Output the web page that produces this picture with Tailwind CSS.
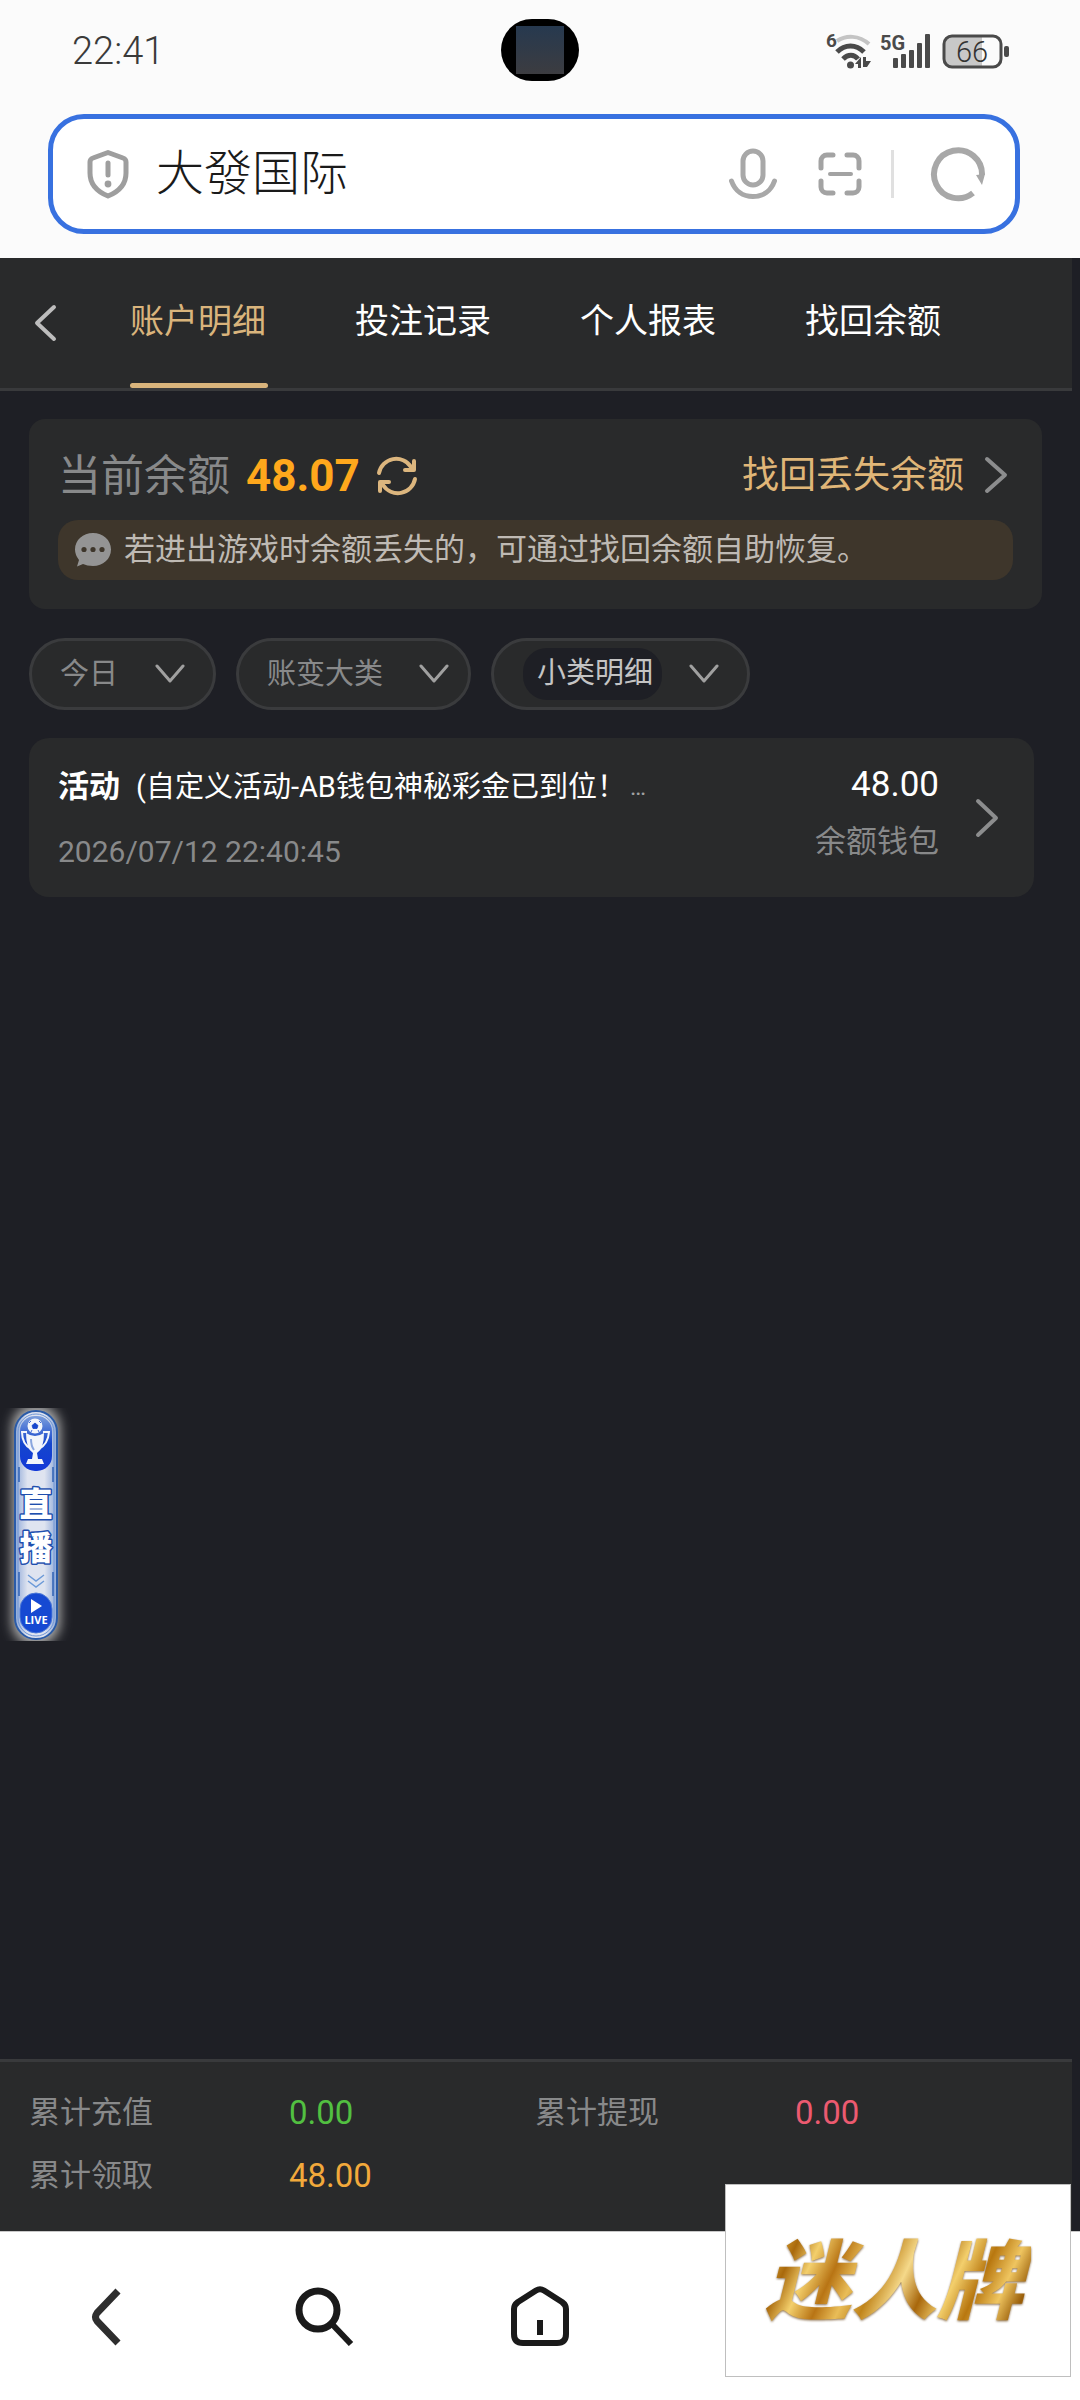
<!DOCTYPE html>
<html lang="zh-CN">
<head>
  <meta charset="UTF-8">
  <meta name="viewport" content="width=device-width, initial-scale=1.0">
  <title>大發国际</title>
  <script src="https://cdn.jsdelivr.net/npm/@tailwindcss/browser@4"></script>
</head>
<body class="relative flex flex-col min-h-screen bg-[#1e1f25] font-['Roboto','Noto_Sans_CJK_SC',sans-serif]">

  <!-- Status bar + address bar -->
  <header class="bg-[#fbfbfb] pb-6">
    <div class="relative flex items-center justify-between h-[114px] pl-[72px] pr-[70px] pb-3">
      <span class="text-[38px] leading-none font-light text-[#3a3a3a]">22:41</span>
      <div class="absolute left-1/2 top-[19px] w-[78px] h-[62px] -translate-x-1/2 rounded-[31px] bg-black overflow-hidden flex items-center justify-center">
        <div class="w-12 h-12 bg-linear-to-b from-[#26394f] to-[#3c3c40]"></div>
      </div>
      <div class="flex items-center">
        <svg class="w-[46px] h-9 overflow-visible" viewBox="0 0 46 36" fill="none" stroke="#4a4a4a" aria-hidden="true">
          <text x="0" y="14" font-size="19" font-weight="700" fill="#4a4a4a" stroke="none">6</text>
          <path d="M11 8 C20 2 33 2 43 11" stroke="#c4c4c4" stroke-width="4"/>
          <path d="M11 19 C19 11 30 11 38 19" stroke-width="5"/>
          <path d="M17 26 C22 21 28 21 32 26" stroke-width="5"/>
          <circle cx="24.500" cy="32" r="3.500" fill="#4a4a4a" stroke="none"/>
          <path d="M35 24v11h-3v-4h-3z M40 24v4h5l-4 6h-4V24z" fill="#4a4a4a" stroke="none"/>
        </svg>
        <svg class="w-[54px] h-9 ml-2 overflow-visible" viewBox="0 0 54 36" fill="#4a4a4a" aria-hidden="true">
          <text x="0" y="17" font-size="20" font-weight="700">5G</text>
          <rect x="13" y="25" width="5" height="10" rx="1"/>
          <rect x="21" y="21" width="5" height="14" rx="1"/>
          <rect x="29" y="17" width="5" height="18" rx="1"/>
          <rect x="37" y="10" width="5" height="25" rx="1"/>
          <rect x="45" y="1" width="5" height="34" rx="1"/>
        </svg>
        <svg class="w-[68px] h-9 ml-2" viewBox="0 0 68 36" aria-hidden="true">
          <path d="M9 3h31v30H9a6 6 0 0 1-6-6V9a6 6 0 0 1 6-6z" fill="#c8c8c8"/>
          <rect x="2" y="3" width="57" height="31" rx="8" fill="none" stroke="#4a4a4a" stroke-width="3"/>
          <rect x="62" y="13" width="5" height="11" rx="2" fill="#4a4a4a"/>
          <text x="30" y="29" font-size="29" font-weight="300" text-anchor="middle" fill="#333">66</text>
        </svg>
      </div>
    </div>
    <div class="flex items-center h-[120px] ml-12 mr-[60px] pl-[33px] pr-[29px] bg-white border-[5px] border-[#3871e0] rounded-[36px]">
      <svg class="w-[44px] h-[50px] shrink-0" viewBox="0 0 44 50" fill="none" stroke="#9e9e9e" stroke-width="5" stroke-linejoin="round" stroke-linecap="round" aria-hidden="true">
        <path d="M22 3.500 L37 9 Q40 10 40 13 V24 C40 36 32 43 22 47 C12 43 4 36 4 24 V13 Q4 10 7 9 Z"/>
        <path d="M22 14v12" stroke-width="5"/>
        <circle cx="22" cy="35" r="3.400" fill="#9e9e9e" stroke="none"/>
      </svg>
      <input type="text" aria-label="搜索" value="大發国际" class="flex-1 min-w-0 ml-[26px] text-[48px] leading-[60px] font-light text-[#1a1a1a] outline-none">
      <button type="button" aria-label="语音">
        <svg class="w-12 h-[52px]" viewBox="0 0 48 52" fill="none" stroke="#a8a8a8" stroke-width="5">
          <rect x="14" y="3" width="20" height="34" rx="10"/>
          <path d="M2.500 33 C6 43 14 48.500 24 48.500 S42 43 45.500 33" stroke-linecap="round"/>
        </svg>
      </button>
      <button type="button" aria-label="扫码" class="ml-10">
        <svg class="w-[46px] h-[46px]" viewBox="0 0 46 46" fill="none" stroke="#a3a3a3" stroke-width="5" stroke-linecap="round">
          <path d="M16 4H10a6 6 0 0 0-6 6v7 M30 4h6a6 6 0 0 1 6 6v7 M4 30v6a6 6 0 0 0 6 6h6 M42 30v6a6 6 0 0 1-6 6h-6"/>
          <path d="M13 23h21" stroke-width="4"/>
        </svg>
      </button>
      <span class="w-[3px] h-12 ml-7 bg-[#e0e0e0]"></span>
      <button type="button" aria-label="刷新" class="ml-9">
        <svg class="w-14 h-14" viewBox="0 0 56 56" fill="none">
          <path d="M43 47 A24 24 0 1 1 52 29" stroke="#a8a8a8" stroke-width="6"/>
          <path d="M46 29 L55 28 L52 39 Z" fill="#a8a8a8"/>
        </svg>
      </button>
    </div>
  </header>

  <div class="flex flex-col flex-1 mr-2">
    <nav class="flex items-center h-[133px] pl-8 bg-[#292a2b] border-b-[3px] border-[#393a3c]">
      <button type="button" aria-label="返回">
        <svg class="w-7 h-10" viewBox="0 0 28 40" fill="none" stroke="#bdbdbd" stroke-width="4" stroke-linecap="round" stroke-linejoin="round">
          <path d="M22 4 L5 20 L22 36"/>
        </svg>
      </button>
      <div class="flex self-stretch gap-[87px] ml-[70px] text-[34px] leading-[126px] text-white whitespace-nowrap">
        <a href="#" class="w-[138px] h-[130px] text-[#d9b47c] flex flex-col justify-between">
          <span class="h-[125px]">账户明细</span>
          <span class="h-[5px] rounded-full bg-[#d9b47c]"></span>
        </a>
        <a href="#" class="w-[138px]">投注记录</a>
        <a href="#" class="w-[138px]">个人报表</a>
        <a href="#" class="w-[138px]">找回余额</a>
      </div>
    </nav>

    <main class="flex-1">
      <!-- Balance -->
      <section class="mt-7 ml-[29px] mr-[30px] px-[29px] pt-8 pb-[29px] rounded-2xl bg-[#292a2b]">
        <div class="flex items-center h-[50px] mb-[19px]">
          <span class="text-[43px] leading-[50px] text-[#88898a]">当前余额</span>
          <span class="ml-4 text-[44px] leading-[50px] font-bold text-[#ffa81c]">48.07</span>
          <button type="button" aria-label="刷新余额" class="ml-4">
            <svg class="w-[42px] h-[42px]" viewBox="0 0 42 42" fill="none" stroke="#dcb67e" stroke-width="4" stroke-linecap="round" stroke-linejoin="round">
              <path d="M3 18 A17.500 17.500 0 0 1 35 12 M38 6 V15 H29"/>
              <path d="M39 24 A17.500 17.500 0 0 1 7 30 M4 36 V27 H13"/>
            </svg>
          </button>
          <a href="#" class="flex items-center ml-auto text-[37px] leading-[50px] text-[#e0b678]">
            找回丢失余额
            <svg class="w-[30px] h-10 ml-[19px]" viewBox="0 0 30 40" fill="none" stroke="#8c8d8e" stroke-width="4" stroke-linecap="round" stroke-linejoin="round">
              <path d="M4 3 L22 19 L4 35"/>
            </svg>
          </a>
        </div>
        <div class="flex items-center h-[60px] pl-4 rounded-[20px] bg-[#3e362b] text-[31px] leading-[60px] text-[#bfbab4] whitespace-nowrap">
          <svg class="w-[38px] h-9 mr-3" viewBox="0 0 38 36" aria-hidden="true">
            <path d="M19 1 C29 1 37 8 37 17.500 S29 34 19 34 Q13 34 9 32 Q6 33 3 34.500 L5 28 Q1 23 1 17.500 C1 8 9 1 19 1z" fill="#949494"/>
            <circle cx="10" cy="17.500" r="2.600" fill="#3e362b"/>
            <circle cx="19" cy="17.500" r="2.600" fill="#3e362b"/>
            <circle cx="28" cy="17.500" r="2.600" fill="#3e362b"/>
          </svg>
          若进出游戏时余额丢失的，可通过找回余额自助恢复。
        </div>
      </section>

      <!-- Filters -->
      <form class="flex gap-5 mt-[29px] ml-[29px] text-[29px] text-[#88898a]">
        <label class="flex items-center justify-between w-[187px] h-[72px] pl-7 pr-[27px] rounded-full border-[3px] border-[#3a3b3d] bg-[#292a2b]">
          <select aria-label="日期" class="appearance-none w-[70px] h-[52px] pt-[2px] outline-none"><option>今日</option></select>
          <svg class="w-8 h-5" viewBox="0 0 32 20" fill="none" stroke="#a0a0a0" stroke-width="3" stroke-linecap="round" stroke-linejoin="round"><path d="M3 2 L16 17 L29 2"/></svg>
        </label>
        <label class="flex items-center justify-between w-[235px] h-[72px] pl-7 pr-[18px] rounded-full border-[3px] border-[#3a3b3d] bg-[#292a2b]">
          <select aria-label="账变大类" class="appearance-none w-[130px] h-[52px] pt-[2px] outline-none"><option>账变大类</option></select>
          <svg class="w-8 h-5" viewBox="0 0 32 20" fill="none" stroke="#a0a0a0" stroke-width="3" stroke-linecap="round" stroke-linejoin="round"><path d="M3 2 L16 17 L29 2"/></svg>
        </label>
        <label class="flex items-center justify-between w-[259px] h-[72px] pl-[29px] pr-[27px] rounded-full border-[3px] border-[#3a3b3d] bg-[#292a2b]">
          <select aria-label="小类明细" class="appearance-none w-[139px] h-[52px] pl-[14px] rounded-3xl bg-[#1e1f25] text-[#c4c4c4] outline-none"><option>小类明细</option></select>
          <svg class="w-8 h-5" viewBox="0 0 32 20" fill="none" stroke="#a0a0a0" stroke-width="3" stroke-linecap="round" stroke-linejoin="round"><path d="M3 2 L16 17 L29 2"/></svg>
        </label>
      </form>

      <!-- Record -->
      <a href="#" class="flex h-[159px] mt-7 ml-[29px] mr-[38px] pl-[29px] pr-8 rounded-[20px] bg-[#292a2b]">
        <div class="flex flex-col gap-[25px] pt-[29px] leading-10 whitespace-nowrap">
          <div class="flex text-white">
            <b class="text-[31px]">活动</b>
            <span class="ml-4 text-[29px]">(自定义活动-AB钱包神秘彩金已到位！</span>
            <span class="ml-1 text-2xl leading-10 text-[#a0a1a2]">…</span>
          </div>
          <time class="text-[30px] text-[#88898a]">2026/07/12 22:40:45</time>
        </div>
        <div class="flex flex-col gap-[17px] pt-[27px] ml-auto text-right leading-10">
          <span class="text-[35px] leading-10 text-white">48.00</span>
          <span class="text-[31px] text-[#88898a]">余额钱包</span>
        </div>
        <svg class="self-center w-7 h-10 ml-[35px]" viewBox="0 0 28 40" fill="none" stroke="#8c8d8e" stroke-width="4" stroke-linecap="round" stroke-linejoin="round" aria-hidden="true">
          <path d="M4 3 L22 20 L4 37"/>
        </svg>
      </a>
    </main>

    <!-- Totals -->
    <dl class="grid grid-cols-[260px_246px_260px_1fr] auto-rows-[63px] h-[172px] pl-[29px] pt-[19px] content-start border-t-[3px] border-[#393a3c] bg-[#292a2b] text-[31px] leading-[63px] text-[#88898a]">
      <dt>累计充值</dt>
      <dd class="text-[33px] leading-[63px] text-[#52c041]">0.00</dd>
      <dt>累计提现</dt>
      <dd class="text-[33px] leading-[63px] text-[#ec5a70]">0.00</dd>
      <dt>累计领取</dt>
      <dd class="text-[33px] leading-[63px] text-[#f2a93b]">48.00</dd>
    </dl>
  </div>

  <!-- Browser toolbar -->
  <footer class="grid grid-cols-5 items-center justify-items-center h-[169px] border-t border-[#c8c8c8] bg-white">
    <button type="button" aria-label="后退">
      <svg class="w-9 h-[60px]" viewBox="0 0 36 60" fill="none" stroke="#2e2e2e" stroke-width="7" stroke-linejoin="round"><path d="M28 5 L7 27 Q4 31 7 35 L28 57"/></svg>
    </button>
    <button type="button" aria-label="搜索">
      <svg class="w-[60px] h-[60px]" viewBox="0 0 60 60" fill="none" stroke="#1a1a1a" stroke-width="7"><circle cx="24" cy="24" r="19"/><path d="M37 37 L57 58" stroke-width="6"/></svg>
    </button>
    <button type="button" aria-label="主页">
      <svg class="w-[60px] h-[62px]" viewBox="0 0 60 62" fill="none" stroke="#1a1a1a" stroke-width="6" stroke-linejoin="round"><path d="M26 5.500 Q30 3 34 5.500 L52 17 Q56 20 56 24 V49 Q56 58 47 58 H13 Q4 58 4 49 V24 Q4 20 8 17 Z"/><path d="M30 35v15"/></svg>
    </button>
  </footer>

  <!-- Floating live entry -->
  <a href="#" aria-label="直播" class="absolute left-0 top-[1408px]">
    <svg class="w-[76px] h-[233px]" viewBox="0 0 76 233" font-family="'Noto Sans CJK SC', sans-serif">
      <defs>
        <filter id="glow" x="-50%" y="-10%" width="200%" height="120%"><feGaussianBlur stdDeviation="6"/></filter>
        <linearGradient id="silver" x1="0" x2="1">
          <stop offset="0" stop-color="#8fa9d8"/><stop offset=".3" stop-color="#dfe4f0"/><stop offset=".7" stop-color="#dfe4f0"/><stop offset="1" stop-color="#8fa9d8"/>
        </linearGradient>
        <linearGradient id="blue" x1="0" y1="0" x2="0" y2="1">
          <stop offset="0" stop-color="#7d9fdc"/><stop offset=".5" stop-color="#1546cd"/><stop offset="1" stop-color="#1238d8"/>
        </linearGradient>
      </defs>
      <rect x="12" y="-4" width="48" height="242" rx="24" fill="#b0b0b0" filter="url(#glow)"/>
      <rect x="15" y="3" width="42" height="228" rx="21" fill="url(#silver)" stroke="#2a5ba8" stroke-width="2"/>
      <rect x="18" y="6" width="36" height="222" rx="18" fill="none" stroke="#6f96d6" stroke-width="1"/>
      <rect x="20" y="8" width="32" height="55" rx="15" fill="url(#blue)"/>
      <path d="M19 59v15M53 59v15M19 164v24M53 164v24" stroke="#2f62b5" stroke-width="1.500"/>
      <!-- trophy -->
      <g fill="#f2f5fb">
        <circle cx="35" cy="18" r="7.500"/>
        <path d="M26 25 Q35 31 44 25 Q44 41 37 45 L38 51 H42 L44 56 H26 L28 51 H32 L33 45 Q26 41 26 25z"/>
      </g>
      <path d="M27 24 H22 Q22 36 31 41 M43 24 H49 Q48 36 39 41" fill="none" stroke="#f2f5fb" stroke-width="2"/>
      <path d="M35 15 L38 17.500 L37 20.500 H33 L32 17.500z M29 15l2-2M41 15l-2-2M31 24l1-2M39 24l-1-2" fill="#1546cd" stroke="#1546cd" stroke-width=".8"/>
      <path d="M31 31 Q31 38 34 42" fill="none" stroke="#8aa6de" stroke-width="2"/>
      <g font-size="33" font-weight="900" text-anchor="middle" fill="#fff" stroke="#1f4fae" stroke-width="3" paint-order="stroke" stroke-linejoin="round">
        <text x="36" y="108">直</text>
        <text x="36" y="152">播</text>
      </g>
      <path d="M28 167 L36 173 L44 167 M28 173 L36 179 L44 173" fill="none" stroke="#6c9ad8" stroke-width="1.500"/>
      <rect x="20" y="185" width="32" height="40" rx="16" fill="#1649d2" stroke="#4b78d8" stroke-width="1"/>
      <path d="M31 191 L42 198 L31 205z" fill="#fff"/>
      <text x="36" y="216" font-family="'Open Sans', sans-serif" font-size="11" font-weight="700" text-anchor="middle" fill="#fff">LIVE</text>
    </svg>
  </a>

  <!-- Corner banner -->
  <a href="#" class="absolute right-[9px] bottom-[23px] flex items-center justify-center w-[346px] h-[193px] pt-1 pr-2 border border-[#bfbfbf] bg-white">
    <span class="px-2 text-[86px] leading-[120px] font-black italic text-transparent bg-clip-text bg-[linear-gradient(115deg,#b97a12_0%,#e6b23e_8%,#a9690c_15%,#f3cf6c_22%,#b87414_30%,#e9bd58_37%,#c0841a_44%,#f5d98a_52%,#a8670c_60%,#f3cf6c_68%,#b8770f_76%,#efc560_84%,#9a5f0a_91%,#d9a132_100%)] drop-shadow-[0_1px_1px_rgba(90,50,0,0.7)]">迷人牌</span>
  </a>
</body>
</html>
